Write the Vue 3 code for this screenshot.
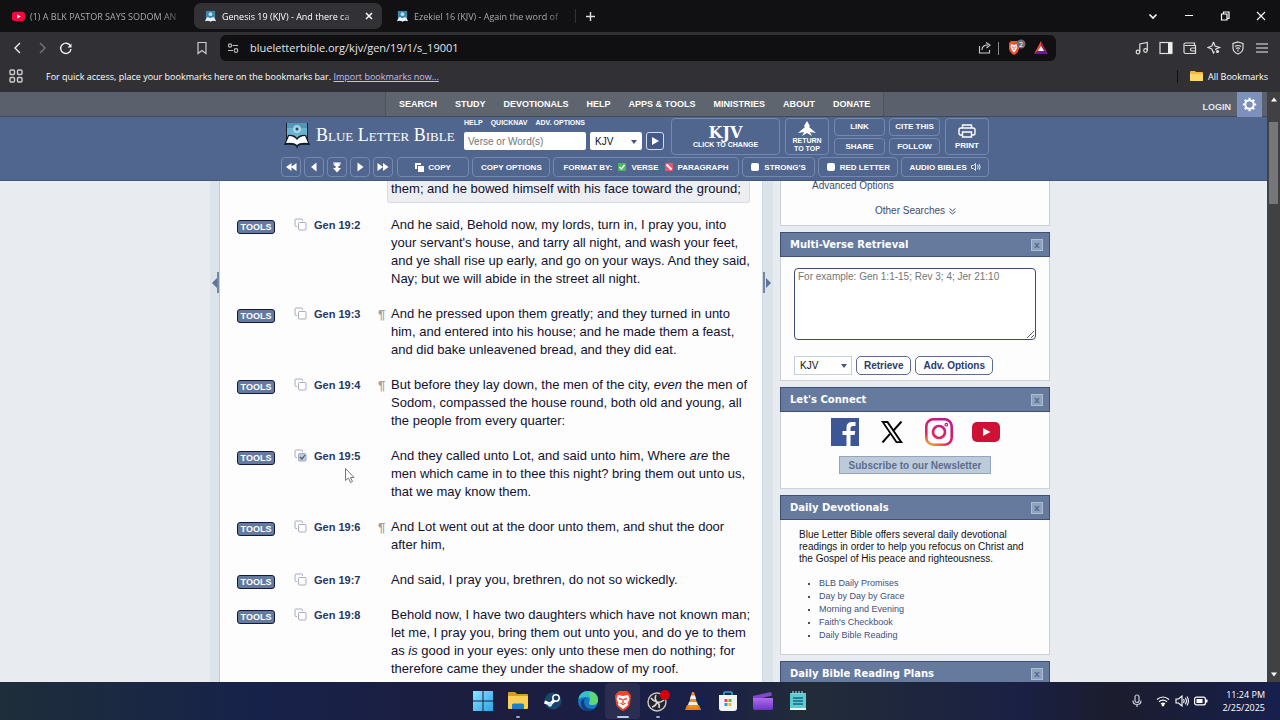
<script setup>
import { ref } from 'vue'

const tabs = [
  { title: '(1) A BLK PASTOR SAYS SODOM AN', icon: 'yt', active: false },
  { title: 'Genesis 19 (KJV) - And there ca', icon: 'blb', active: true },
  { title: 'Ezekiel 16 (KJV) - Again the word of', icon: 'blb', active: false }
]
const nav = ['SEARCH', 'STUDY', 'DEVOTIONALS', 'HELP', 'APPS & TOOLS', 'MINISTRIES', 'ABOUT', 'DONATE']
const steps = [
  { name: 'Previous book', d: 'M7.500 3v8L2 7zM12.500 3v8L7 7z' },
  { name: 'Previous chapter', d: 'M9.500 2.500v9L4 7z' },
  { name: 'Choose chapter', d: 'M3 2.500h8v1H9.500v1h1.500L7 7.500 3 4.500h1.500v-1H3zM3 8h2.500V7h3v1H11l-4 4.500z' },
  { name: 'Next chapter', d: 'M4.500 2.500v9L10.500 7z' },
  { name: 'Next book', d: 'M1.500 3v8L7 7zM7 3v8l5.500-4z' }
]
/* Each verse is a list of printed lines; words between asterisks are italic. */
const verses = [
  { n: '19:2', lines: ['And he said, Behold now, my lords, turn in, I pray you, into', "your servant's house, and tarry all night, and wash your feet,", 'and ye shall rise up early, and go on your ways. And they said,', 'Nay; but we will abide in the street all night.'] },
  { n: '19:3', para: true, lines: ['And he pressed upon them greatly; and they turned in unto', 'him, and entered into his house; and he made them a feast,', 'and did bake unleavened bread, and they did eat.'] },
  { n: '19:4', para: true, lines: ['But before they lay down, the men of the city, *even* the men of', 'Sodom, compassed the house round, both old and young, all', 'the people from every quarter:'] },
  { n: '19:5', checked: true, lines: ['And they called unto Lot, and said unto him, Where *are* the', 'men which came in to thee this night? bring them out unto us,', 'that we may know them.'] },
  { n: '19:6', para: true, lines: ['And Lot went out at the door unto them, and shut the door', 'after him,'] },
  { n: '19:7', lines: ['And said, I pray you, brethren, do not so wickedly.'] },
  { n: '19:8', lines: ['Behold now, I have two daughters which have not known man;', 'let me, I pray you, bring them out unto you, and do ye to them', 'as *is* good in your eyes: only unto these men do nothing; for', 'therefore came they under the shadow of my roof.'] }
]
const devotionals = ['BLB Daily Promises', 'Day by Day by Grace', 'Morning and Evening', "Faith's Checkbook", 'Daily Bible Reading']
const apps = ['start', 'files', 'steam', 'edge', 'brave', 'obs', 'vlc', 'store', 'clip', 'notes']
const url = ref('blueletterbible.org/kjv/gen/19/1/s_19001')
const format = ref('verse')
</script>

<template>
  <div class="screen">
    <header class="browser">
      <div class="tabs">
        <div v-for="t in tabs" :key="t.title" class="tab" :class="{ active: t.active }">
          <svg v-if="t.icon === 'yt'" class="fav" viewBox="0 0 14 14"><rect y="2" width="14" height="10" rx="3" fill="#f5063c" /><path d="M5.500 4.800v4.400L9.500 7z" fill="#fff" /></svg>
          <svg v-else class="fav" viewBox="0 0 14 14"><rect x="2" y="1" width="10" height="8" fill="#3c87a8" /><circle cx="7" cy="4.500" r="2" fill="#b9dcec" /><path d="M1 12l2-4q2-.5 4 1 2-1.500 4-1l2 4q-4-.8-6 .6-2-1.400-6-.6z" fill="#eef6fb" /></svg>
          <span class="tab-title">{{ t.title }}</span>
          <button v-if="t.active" class="plain close" aria-label="Close tab"><svg viewBox="0 0 8 8" width="8" height="8"><path d="M1 1l6 6M7 1L1 7" stroke="#fff" stroke-width="1.500" /></svg></button>
        </div>
        <button class="plain newtab" aria-label="New tab"><svg width="9" height="9" viewBox="0 0 9 9"><path d="M4.500 0v9M0 4.500h9" stroke="#ddd" stroke-width="1.400" /></svg></button>
        <div class="window">
          <button class="plain" aria-label="Search tabs"><svg width="12" height="12" viewBox="0 0 12 12"><path d="M2.500 4.500L6 8l3.500-3.500" fill="none" stroke="#fff" stroke-width="1.600" /></svg></button>
          <button class="plain" aria-label="Minimize"><svg width="12" height="12" viewBox="0 0 12 12"><path d="M2 5.500h8" stroke="#fff" /></svg></button>
          <button class="plain" aria-label="Restore"><svg width="12" height="12" viewBox="0 0 12 12"><path d="M2.500 4h5.500v6H2.500zM4.500 4V2h5.500v6.500H8" fill="none" stroke="#fff" stroke-width="1.200" /></svg></button>
          <button class="plain" aria-label="Close"><svg width="12" height="12" viewBox="0 0 12 12"><path d="M2 2l8 8M10 2l-8 8" stroke="#fff" stroke-width="1.100" /></svg></button>
        </div>
      </div>

      <div class="toolbar">
        <button class="plain t1" aria-label="Back"><svg width="14" height="14" viewBox="0 0 14 14"><path d="M9 2L4 7l5 5" fill="none" stroke="#eee" stroke-width="1.400" /></svg></button>
        <button class="plain t1" aria-label="Forward"><svg width="14" height="14" viewBox="0 0 14 14"><path d="M5 2l5 5-5 5" fill="none" stroke="#77777b" stroke-width="1.400" /></svg></button>
        <button class="plain t1" aria-label="Reload"><svg width="14" height="14" viewBox="0 0 14 14"><path d="M11.500 5A5.200 5.200 0 1 0 12 8" fill="none" stroke="#eee" stroke-width="1.400" /><path d="M12.500 2.500v4h-4z" fill="#eee" /></svg></button>
        <button class="plain mark" aria-label="Bookmark"><svg width="14" height="14" viewBox="0 0 14 14"><path d="M3 1.500h8v11L7 9.500l-4 3z" fill="none" stroke="#ccc" stroke-width="1.200" /></svg></button>
        <div class="address">
          <svg width="12" height="12" viewBox="0 0 12 12" fill="none" stroke="#bbb" stroke-width="1.200"><circle cx="3" cy="3.500" r="1.600" /><path d="M5.500 3.500H11M1 8.500h5" /><circle cx="9" cy="8.500" r="1.800" /></svg>
          <input v-model="url" aria-label="Address" />
          <svg width="14" height="14" viewBox="0 0 14 14" fill="none" stroke="#ccc" stroke-width="1.100"><path d="M1.500 5v7h10V9M4 9q0-5 6-5M8 1.500L12 4 8.500 7" /></svg>
          <i class="bar"></i>
          <svg class="shield" width="20" height="18" viewBox="0 0 20 18"><path d="M2 4l2-2h6l2 2v6q-1 4-5 6-4-2-5-6z" fill="#f0502e" /><path d="M4 5l3 1 3-1 .5 3-2 4L7 13.500 5.500 12l-2-4z" fill="#fff" /><path d="M5 8h1.500M8 8h1.500M7 8v3" stroke="#f0502e" /><circle cx="14" cy="5" r="4.500" fill="#6e6e78" /><text x="14" y="7.500" font-size="7" text-anchor="middle" fill="#fff">2</text></svg>
          <svg class="bat" width="16" height="14" viewBox="0 0 16 14"><path d="M8 0L1 13l7-5z" fill="#f14a2b" /><path d="M8 0l7 13-7-5z" fill="#9b1f63" /><path d="M1 13h14L8 8z" fill="#6a1b9a" /><path d="M8 5l3 5H5z" fill="#fff" /></svg>
        </div>
        <div class="tools">
          <button class="plain" aria-label="Media"><svg width="14" height="14" viewBox="0 0 14 14" fill="none" stroke="#ddd" stroke-width="1.200"><circle cx="3" cy="11" r="1.800" /><circle cx="10.500" cy="9.500" r="1.800" /><path d="M4.800 11V3l7.500-1.500v8" /></svg></button>
          <button class="plain" aria-label="Sidebar"><svg width="14" height="14" viewBox="0 0 14 14"><rect x="1" y="1.500" width="12" height="11" fill="none" stroke="#ddd" stroke-width="1.200" /><path d="M9 2h4v10H9z" fill="#eee" /></svg></button>
          <button class="plain" aria-label="Wallet"><svg width="14" height="14" viewBox="0 0 14 14" fill="none" stroke="#ddd" stroke-width="1.200"><path d="M11.500 4.500V2H2.500Q1 2 1 3.500V11q0 1.500 1.500 1.500h10v-8H2M12.500 7H9a1.500 1.500 0 0 0 0 3h3.500" /></svg></button>
          <button class="plain" aria-label="Assistant"><svg width="14" height="14" viewBox="0 0 14 14" fill="none" stroke="#ddd" stroke-width="1.200"><path d="M6.500 1l1.500 4 4.500 1.500L9 8l-.5 1M6.500 1L4.800 5 1 6.500 4.800 8 6.500 12l1-1.500" /><circle cx="10.500" cy="10.500" r="1" fill="#ddd" /></svg></button>
          <button class="plain" aria-label="VPN"><svg width="14" height="14" viewBox="0 0 14 14" fill="none" stroke="#ddd" stroke-width="1.200"><path d="M7 1l5 1.500V7q0 4-5 6-5-2-5-6V2.500zM4 5.500q3-2 6 0M5 7.500q2-1.300 4 0M7 8.500v2" /></svg></button>
          <button class="plain" aria-label="Menu"><svg width="14" height="14" viewBox="0 0 14 14"><path d="M1 3h12M1 7h12M1 11h12" stroke="#eee" stroke-width="1.200" /></svg></button>
        </div>
      </div>

      <div class="bookmarks">
        <svg width="16" height="16" viewBox="0 0 16 16" fill="none" stroke="#ccc" stroke-width="1.400"><rect x="2" y="2" width="4.500" height="4.500" rx="1" /><rect x="9.500" y="2" width="4.500" height="4.500" rx="1" /><rect x="2" y="9.500" width="4.500" height="4.500" rx="1" /><rect x="9.500" y="9.500" width="4.500" height="4.500" rx="1" /></svg>
        <p>For quick access, place your bookmarks here on the bookmarks bar. <a href="#">Import bookmarks now...</a></p>
        <button class="plain all"><svg width="13" height="12" viewBox="0 0 13 12"><path d="M0 2q0-1 1-1h4l1 1h6q1 0 1 1v7q0 1-1 1H1q-1 0-1-1z" fill="#f5b73c" /><path d="M0 4h13v6q0 1-1 1H1q-1 0-1-1z" fill="#ffd868" /></svg>All Bookmarks</button>
      </div>
    </header>

    <div class="view">
      <div class="site">
        <nav class="topnav">
          <div class="navlinks"><a v-for="n in nav" :key="n" href="#">{{ n }}</a></div>
          <a class="login" href="#">LOGIN</a>
          <button class="gear" aria-label="Settings"><svg width="15" height="15" viewBox="0 0 15 15"><circle cx="7.500" cy="7.500" r="4.200" fill="none" stroke="#fff" stroke-width="2" /><g stroke="#fff" stroke-width="2.200"><path d="M7.500 .8v2M7.500 12.200v2M.8 7.500h2M12.200 7.500h2M2.800 2.800l1.400 1.400M10.800 10.800l1.400 1.400M2.800 12.200l1.400-1.400M10.800 4.200l1.400-1.400" /></g></svg></button>
        </nav>

        <div class="header">
          <div class="head-in">
            <div class="row1">
              <a class="brand" href="#">
                <svg width="28" height="30" viewBox="0 0 28 30"><path d="M3 3h22v17H3z" fill="#17222f" /><path d="M4 3h20v14q-6-1-10 2-4-3-10-2z" fill="#69b3cf" /><path d="M4 3h20v5H4z" fill="#4f97b8" /><circle cx="14" cy="9" r="4" fill="#c6e6f0" opacity=".7" /><circle cx="14" cy="9" r="1.500" fill="#204b66" /><path d="M1 25l4-10q6-1 9 3 3-4 9-3l4 10q-9-1-12 1l-1 3-1-3q-3-2-12-1z" fill="#101b2b" /><path d="M3 23l3-7q5 0 8 4 3-4 8-4l3 7q-8-1-11 2-3-3-11-2z" fill="#fff" /></svg>
                <span>Blue Letter Bible</span>
              </a>
              <form class="find" @submit.prevent>
                <div class="mini"><a href="#">HELP</a><a href="#">QUICKNAV</a><a href="#">ADV. OPTIONS</a></div>
                <div class="fields">
                  <input aria-label="Verse or Word(s)" placeholder="Verse or Word(s)" />
                  <span class="pick"><select aria-label="Search version"><option>KJV</option></select></span>
                  <button class="go" aria-label="Search"><svg width="9" height="10" viewBox="0 0 9 10"><path d="M1 1l7 4-7 4z" fill="#fff" /></svg></button>
                </div>
              </form>
              <button class="hb version"><b>KJV</b><small>CLICK TO CHANGE</small></button>
              <button class="hb top"><svg width="20" height="16" viewBox="0 0 20 16"><path d="M10 0l3 5-1 1 7 6-6-1 2 4-5-3-5 3 2-4-6 1 7-6-1-1z" fill="#fff" /></svg><small>RETURN<br />TO TOP</small></button>
              <div class="quad">
                <button class="hb">LINK</button><button class="hb">CITE THIS</button>
                <button class="hb">SHARE</button><button class="hb">FOLLOW</button>
              </div>
              <button class="hb print"><svg width="18" height="16" viewBox="0 0 18 16" fill="none" stroke="#fff" stroke-width="1.400"><path d="M4.500 5V2h9v3M4 12H2.500Q1 12 1 10V7q0-2 2-2h12q2 0 2 2v3q0 2-1.500 2H14M4.500 9h9v5h-9z" /></svg>PRINT</button>
            </div>
            <div class="row2">
              <button v-for="s in steps" :key="s.name" class="hb step" :aria-label="s.name"><svg width="14" height="14" viewBox="0 0 14 14"><path :d="s.d" fill="#fff" /></svg></button>
              <button class="hb copy"><svg width="9" height="9" viewBox="0 0 9 9"><path d="M0 0h6v2H2v4H0z" fill="#fff" /><path d="M3 3h6v6H3z" fill="#fff" /></svg>COPY</button>
              <button class="hb opts">COPY OPTIONS</button>
              <div class="hb format" role="radiogroup" aria-label="Format by">
                <span>FORMAT BY:</span>
                <label><input v-model="format" type="radio" value="verse" name="format" /><svg width="8" height="8" viewBox="0 0 8 8"><rect width="8" height="8" rx="1" fill="#49b861" /><path d="M1.500 4l2 2 3-4" fill="none" stroke="#fff" stroke-width="1.400" /></svg>VERSE</label>
                <label><input v-model="format" type="radio" value="paragraph" name="format" /><svg width="8" height="8" viewBox="0 0 8 8"><rect width="8" height="8" rx="1" fill="#e8566a" /><path d="M1.500 1.500l5 5" stroke="#fff" stroke-width="2" /></svg>PARAGRAPH</label>
              </div>
              <label class="hb strong"><input type="checkbox" />STRONG'S</label>
              <label class="hb red"><input type="checkbox" />RED LETTER</label>
              <button class="hb audio">AUDIO BIBLES<svg width="10" height="8" viewBox="0 0 10 8" fill="none" stroke="#e3e8f2"><path d="M.5 2.500h2l2-2v7l-2-2h-2zM6.500 2q1.500 2 0 4M8 1q2.500 3 0 6" /></svg></button>
            </div>
          </div>
        </div>

        <div class="body">
          <div class="cols">
            <div class="gutter left"><button class="plain" aria-label="Collapse left"></button></div>
            <main>
              <section class="verse first"><p class="text">them; and he bowed himself with his face toward the ground;</p></section>
              <section v-for="v in verses" :key="v.n" class="verse">
                <button class="toolbtn">TOOLS</button>
                <button class="plain dup" :aria-label="'Copy Gen ' + v.n"><svg width="13" height="13" viewBox="0 0 13 13"><path d="M3 8.500H2Q1 8.500 1 7.500V2q0-1 1-1h5.500q1 0 1 1v1" fill="none" stroke="#a9adbb" /><rect x="4.500" y="4.500" width="7.500" height="7.500" rx="1" :fill="v.checked ? '#c3cadb' : '#fff'" :stroke="v.checked ? '#a3abc0' : '#a9adbb'" /><path v-if="v.checked" d="M6 8l2 2 3-4" fill="none" stroke="#44557c" stroke-width="1.200" /></svg></button>
                <a class="refr" href="#">Gen {{ v.n }}</a>
                <span class="pil"><template v-if="v.para">¶</template></span>
                <p class="text"><span v-for="line in v.lines" :key="line" class="line"><template v-for="(p, i) in line.split('*')" :key="i"><em v-if="i % 2">{{ p }}</em><template v-else>{{ p }}</template></template></span></p>
              </section>
            </main>
            <div class="gutter right"><button class="plain" aria-label="Collapse right"></button></div>
            <aside>
              <section class="panel searches"><a href="#">Advanced Options</a><a class="other" href="#">Other Searches <svg width="7" height="7" viewBox="0 0 7 7" fill="none" stroke="#3f5175"><path d="M.5 .5l3 2.500 3-2.500M.5 3.500l3 2.500 3-2.500" /></svg></a></section>
              <section class="panel">
                <h2>Multi-Verse Retrieval<button class="x" aria-label="Close Multi-Verse Retrieval">x</button></h2>
                <div class="multi">
                  <textarea aria-label="Verses" placeholder="For example: Gen 1:1-15; Rev 3; 4; Jer 21:10"></textarea>
                  <div class="acts"><span class="pick"><select aria-label="Version"><option>KJV</option></select></span><button>Retrieve</button><button>Adv. Options</button></div>
                </div>
              </section>
              <section class="panel">
                <h2>Let's Connect<button class="x" aria-label="Close Let's Connect">x</button></h2>
                <div class="connect">
                  <div class="social">
                    <a href="#" aria-label="Facebook"><svg width="28" height="28" viewBox="0 0 28 28"><path d="M0 0h28v28H0z" fill="#3d5796" /><path d="M15.500 28V17h-4v-4h4V9.500Q15.500 4 21 4h3.500v4H22q-2.500 0-2.500 2.500V13h4.800l-.8 4h-4v11z" fill="#fff" /></svg></a>
                    <a href="#" aria-label="X"><svg width="22" height="22" viewBox="0 0 22 22"><path d="M0 0h7l15 22h-7zM3.500 2l12.500 18.200h2.500L6 2z" fill="#050505" fill-rule="evenodd" /><path d="M20.500 .5L12.500 9.500M9 12.800L1.500 21.500" fill="none" stroke="#050505" stroke-width="2" /></svg></a>
                    <a href="#" aria-label="Instagram"><svg width="28" height="28" viewBox="0 0 28 28" fill="none" stroke="url(#ig)" stroke-width="2.600"><defs><linearGradient id="ig" gradientUnits="userSpaceOnUse" x1="6" y1="28" x2="20" y2="0"><stop offset="0" stop-color="#f9a233" /><stop offset=".3" stop-color="#e0245e" /><stop offset="1" stop-color="#c0158f" /></linearGradient></defs><rect x="1.300" y="1.300" width="25.400" height="25.400" rx="7" /><circle cx="14" cy="14" r="6" /><circle cx="21.300" cy="6.700" r=".6" /></svg></a>
                    <a href="#" aria-label="YouTube"><svg width="28" height="20" viewBox="0 0 28 20"><rect width="28" height="20" rx="5" fill="#ce1236" /><path d="M11 6v8l7.500-4z" fill="#fff" /></svg></a>
                  </div>
                  <button class="sub">Subscribe to our Newsletter</button>
                </div>
              </section>
              <section class="panel">
                <h2>Daily Devotionals<button class="x" aria-label="Close Daily Devotionals">x</button></h2>
                <div class="daily">
                  <p>Blue Letter Bible offers several daily devotional<br />readings in order to help you refocus on Christ and<br />the Gospel of His peace and righteousness.</p>
                  <ul><li v-for="d in devotionals" :key="d"><a href="#">{{ d }}</a></li></ul>
                </div>
              </section>
              <section class="panel"><h2>Daily Bible Reading Plans<button class="x" aria-label="Close Daily Bible Reading Plans">x</button></h2></section>
            </aside>
          </div>
        </div>
      </div>
      <div class="scroll">
        <svg width="8" height="5" viewBox="0 0 8 5"><path d="M1 4.500l3-4 3 4z" fill="#fff" /></svg>
        <div class="track"><div class="thumb"></div></div>
        <svg width="8" height="5" viewBox="0 0 8 5"><path d="M1 .5l3 4 3-4z" fill="#fff" /></svg>
      </div>
      <svg class="pointer" width="12" height="18" viewBox="0 0 12 18"><path d="M1.500 1.500v12l3-2.500 2 4.500 2-1-2-4H10z" fill="#fff" stroke="#777" /></svg>
    </div>

    <footer class="taskbar">
      <div class="apps">
        <button v-for="a in apps" :key="a" class="plain app" :class="a" :aria-label="a">
          <svg v-if="a === 'start'" width="20" height="20" viewBox="0 0 20 20"><defs><linearGradient id="w" x1="0" y1="0" x2="1" y2="1"><stop offset="0" stop-color="#8be4ff" /><stop offset="1" stop-color="#28a3ea" /></linearGradient></defs><path d="M0 0h9.500v9.500H0zM10.500 0H20v9.500h-9.500zM0 10.500h9.500V20H0zM10.500 10.500H20V20h-9.500z" fill="url(#w)" /></svg>
          <svg v-else-if="a === 'files'" width="20" height="20" viewBox="0 0 20 20"><path d="M0 2q0-1 1-1h6l2 2h10q1 0 1 1v5H0z" fill="#d99c22" /><path d="M0 5h20v12q0 1-1 1H1q-1 0-1-1z" fill="#fbcf56" /><path d="M4 18v-4q0-1.500 1.500-1.500h9Q16 12.500 16 14v4z" fill="#1d80c4" /></svg>
          <svg v-else-if="a === 'steam'" width="20" height="20" viewBox="0 0 20 20"><circle cx="10" cy="10" r="8.500" fill="#14486e" /><path d="M1.500 10l8 3 4-3 3-1V4l-5-2-3 7-3 1.500z" fill="#122a49" /><path d="M1.500 11l5.500 2 5-4" fill="none" stroke="#fff" stroke-width="3" /><circle cx="13" cy="7" r="3.200" fill="#1d3a5c" stroke="#fff" stroke-width="1.500" /><circle cx="7" cy="13.500" r="2.200" fill="#d7e1ea" /></svg>
          <svg v-else-if="a === 'edge'" width="20" height="20" viewBox="0 0 20 20"><circle cx="10" cy="10" r="10" fill="#1478c7" /><path d="M.5 8Q2 0 10 0q9 0 10 8 0 6-6 6-4 0-2.500-3Q13 6 8 6 3 6 .5 8z" fill="#35c0c9" /><path d="M13 1q7 2 7 8 0 5-6 5-4 0-2.500-3Q14 5 10 2z" fill="#5fd873" /><path d="M6 10q0 8 8 8 2 0 4-1.500Q14 21 8 19.500 2 17 3 11 4 7.500 8 7 6 8 6 10z" fill="#0c3f7d" /></svg>
          <svg v-else-if="a === 'brave'" width="20" height="20" viewBox="0 0 20 20"><path d="M3 3l3-3h8l3 3 1 2-1 8q-1 4-7 7-6-3-7-7L2 5z" fill="#f0452a" /><path d="M5 4l5 1 5-1 1.500 4-2 4 .5 2-5 4-5-4 .5-2-2-4z" fill="#fff" /><path d="M6 7.500l3 1M14 7.500l-3 1M10 8v4M7.500 12l2.500 1.500L12.500 12" stroke="#f0452a" stroke-width="1.400" fill="none" /></svg>
          <svg v-else-if="a === 'obs'" width="24" height="22" viewBox="0 0 24 22"><circle cx="11" cy="12" r="9" fill="#242429" stroke="#c8c8cc" stroke-width="1.400" /><path d="M10 5q-2 4 1 7 4 1 7-2M11 12q-1 4-5 5M11 12q-4-1-6-4M11 12q3 2 2 6" stroke="#d7d7da" stroke-width="1.600" fill="none" /><circle cx="19" cy="5" r="5" fill="#d9000d" /></svg>
          <svg v-else-if="a === 'vlc'" width="20" height="20" viewBox="0 0 20 20"><path d="M4 14h12l2 5H2z" fill="#ee7f12" /><path d="M9 1h2l4 15q-5 2-10 0z" fill="#f58b1b" /><path d="M8 4.500h4l1 3.500H7zM6 11h8l1 3H5z" fill="#eef0f2" /></svg>
          <svg v-else-if="a === 'store'" width="20" height="20" viewBox="0 0 20 20"><path d="M6 5V2q0-1 1-1h6q1 0 1 1v3" fill="none" stroke="#36a7e0" stroke-width="1.600" /><path d="M1 4h18v13q0 3-3 3H4q-3 0-3-3z" fill="#f3f4f6" /><path d="M6.500 8h3v3h-3z" fill="#ee4b2c" /><path d="M10.500 8h3v3h-3z" fill="#6fb62c" /><path d="M6.500 12h3v3h-3z" fill="#2b9be0" /><path d="M10.500 12h3v3h-3z" fill="#f8b819" /></svg>
          <svg v-else-if="a === 'clip'" width="20" height="20" viewBox="0 0 20 20"><defs><linearGradient id="cl" x1="0" y1="0" x2="0" y2="1"><stop offset="0" stop-color="#b06cf0" /><stop offset="1" stop-color="#6a37c4" /></linearGradient></defs><path d="M0 5L18 1l1 3.500L5 8H0z" fill="#8446cf" /><path d="M0 7h20v10q0 2-2 2H2q-2 0-2-2z" fill="url(#cl)" /></svg>
          <svg v-else width="18" height="20" viewBox="0 0 18 20"><path d="M1 2h16v16H1z" fill="#5ccbd3" /><path d="M1 17h16v2H1z" fill="#f2f5f6" /><path d="M4 0v3M7 0v3M10 0v3M13 0v3" stroke="#c3edf0" /><path d="M4 7h10M4 10h10M4 13h10" stroke="#156a7c" stroke-width="1.400" /></svg>
        </button>
      </div>
      <div class="tray">
        <svg width="12" height="14" viewBox="0 0 12 14" fill="none" stroke="#c8cbd6" stroke-width="1.200"><rect x="4" y="1" width="4" height="7.500" rx="2" /><path d="M2 6.500q0 4 4 4t4-4M6 10.500V13" /></svg>
        <svg class="wifi" width="14" height="12" viewBox="0 0 14 12" fill="none" stroke="#fff" stroke-width="1.200"><path d="M1 4.500q6-5 12 0M3 6.800q4-3.300 8 0M5 9q2-1.600 4 0" /><circle cx="7" cy="10" r=".8" fill="#fff" /></svg>
        <svg width="14" height="12" viewBox="0 0 14 12" fill="none" stroke="#fff" stroke-width="1.100"><path d="M1 4h2.500L7 1v10L3.500 8H1zM8.500 4q1.200 2 0 4M10.300 2.800q2.200 3.200 0 6.400M12 1.500q2.800 4.500 0 9" /></svg>
        <svg width="14" height="10" viewBox="0 0 14 10"><rect x=".6" y="1.100" width="10.800" height="7.800" rx="2" fill="none" stroke="#fff" stroke-width="1.200" /><path d="M2.500 3h6v4h-6zM12 3.500h1.500v3H12z" fill="#fff" /></svg>
        <div class="clock">11:24 PM<br />2/25/2025</div>
      </div>
    </footer>
  </div>
</template>

<style>
body { margin: 0; background: #111113; }
</style>

<style scoped>
* { box-sizing: border-box; }
.screen { height: 100vh; display: flex; flex-direction: column; overflow: hidden; font-family: "Liberation Sans", Arial, sans-serif; color: #0d1030; }
button, input, select, textarea { font-family: inherit; margin: 0; }
a { text-decoration: none; color: inherit; }
p, h2, ul { margin: 0; padding: 0; }
svg { flex: none; display: block; }
.plain { border: 0; background: none; padding: 0; color: inherit; display: flex; align-items: center; justify-content: center; }

.browser { flex: none; background: #313135; color: #fff; font-family: "Open Sans", "Noto Sans", sans-serif; font-size: 9px; }
.tabs { height: 32px; background: #111113; display: flex; align-items: center; }
.tab { width: 188px; height: 26px; display: flex; align-items: center; padding: 0 9px 0 10px; gap: 5px; color: #aaa; border-radius: 7px; }
.tab:first-child { width: 194px; padding-left: 12px; }
.tab:nth-child(3) { width: 193px; padding-left: 14px; padding-right: 6px; }
.tab.active { background: #323236; color: #fff; }
.fav { width: 13px; height: 13px; }
.tab-title { flex: 1; overflow: hidden; white-space: nowrap; mask-image: linear-gradient(90deg, #000 85%, transparent); }
.close { width: 8px; }
.newtab { width: 29px; border-left: 1px solid #333; height: 14px; }
.window { margin-left: auto; margin-right: 13px; display: flex; gap: 24px; }
.toolbar { height: 30px; display: flex; align-items: center; padding: 2px 11px 0; }
.t1 { margin-right: 10px; }
.mark { margin-left: 112px; margin-right: 11px; }
.address { flex: none; width: 836px; height: 26px; background: #101012; border-radius: 6px; display: flex; align-items: center; padding: 0 7px; }
.address input { flex: 1; border: 0; background: none; color: #e4e4e6; font-size: 11px; padding: 0 0 1px 11px; outline: 0; }
.bar { width: 1px; height: 13px; background: #888; margin: 0 8px 0 6px; }
.bat { margin-left: 6px; }
.tools { margin-left: auto; display: flex; gap: 10px; }
.bookmarks { height: 30px; display: flex; align-items: center; padding: 0 12px 2px 8px; }
.bookmarks p { margin-left: 22px; }
.bookmarks a { color: #c5bdf5; text-decoration: underline; }
.all { margin-left: auto; gap: 5px; border-left: 1px solid #111; padding-left: 12px; font: inherit; }

.view { flex: 1; min-height: 0; display: flex; position: relative; }
.site { flex: 1; min-width: 0; display: flex; flex-direction: column; background: #e8ecf0; }
.topnav { flex: none; height: 25px; background: #5a616c; border-bottom: 1px solid #414959; color: #fff; display: flex; align-items: center; font-size: 9px; font-weight: bold; }
.navlinks { height: 24px; margin-left: 385px; padding: 0 4px; border: 1px solid #4c535e; border-width: 0 1px; background: #5e656f; display: flex; align-items: center; }
.navlinks a { padding: 0 9px; }
.login { margin-left: auto; margin-top: 5px; color: #e4e7ec; }
.gear { width: 25px; height: 25px; margin: 0 5px 0 6px; border: 0; padding: 0; background: #7c90bb; display: flex; align-items: center; justify-content: center; }
.header { flex: none; height: 64px; background: #51668f; border-bottom: 1px solid #43577f; color: #fff; }
.head-in { width: 708px; margin-left: 281px; padding-top: 1px; }
.row1 { display: flex; height: 37px; gap: 5px; }
.row2 { display: flex; gap: 3px; margin-top: 2px; }
.brand { width: 178px; display: flex; gap: 5px; padding: 0 0 3px 2px; align-items: center; font-family: "Liberation Serif", serif; font-size: 18px; font-variant: small-caps; white-space: nowrap; }
.find { width: 202px; }
.mini { display: flex; gap: 8px; font-size: 7px; line-height: 10px; font-weight: bold; margin-bottom: 4px; }
.fields { display: flex; gap: 4px; }
.fields input { width: 122px; height: 18px; border: 0; border-radius: 2px; padding: 0 4px; font-size: 10px; }
.fields select { width: 52px; height: 18px; border: 0; border-radius: 2px; padding: 0 5px; font-size: 10px; background: #fff; color: #111; appearance: none; }
.pick { position: relative; display: flex; }
.pick::after { content: ""; position: absolute; right: 5px; top: 8px; border: 3px solid transparent; border-top: 4px solid #44587f; border-bottom: 0; pointer-events: none; }
.go { width: 18px; height: 18px; border: 1px solid #d5dcea; border-radius: 3px; background: #44598a; padding: 0; display: flex; align-items: center; justify-content: center; }
.hb { border: 1px solid #7488b0; border-radius: 4px; background: none; color: #fff; font-size: 8px; line-height: 9px; font-weight: bold; padding: 0; display: flex; align-items: center; justify-content: center; white-space: nowrap; }
.hb small { font-size: 7px; line-height: 8px; }
.version { width: 109px; flex-direction: column; }
.version b { font-family: "DejaVu Serif", serif; font-size: 16px; line-height: 17px; }
.top { width: 44px; flex-direction: column; }
.quad { width: 106px; display: grid; grid-template-columns: 1fr 1fr; gap: 2px 4px; }
.print { width: 44px; flex-direction: column; gap: 2px; }
.row2 .hb { height: 20px; gap: 4px; }
.step { width: 20px; }
.row2 .copy { width: 73px; margin-left: 1px; }
.opts { width: 78px; }
.format { width: 186px; }
.row2 .format { gap: 6px; }
.format label { display: flex; align-items: center; gap: 5px; position: relative; }
.format input { position: absolute; opacity: 0; width: 8px; height: 8px; margin: 0; }
.strong { width: 74px; }
.red { width: 80px; }
.row2 .strong, .row2 .red { gap: 5px; }
.strong input, .red input { appearance: none; width: 8px; height: 8px; background: #fff; border-radius: 2px; }
.audio { width: 88px; }

.body { flex: 1; min-height: 0; overflow: hidden; }
.cols { width: 847px; margin: 0 auto; display: flex; min-height: 100%; }
.gutter { background: #dce3e9; display: flex; flex-direction: column; align-items: center; padding-top: 91px; }
.gutter button { height: 21px; width: 8px; }
.gutter button::before { content: ""; border: 5px solid transparent; }
.left { width: 10px; border-right: 1px solid #c3cdd8; align-items: flex-end; }
.left button { border-right: 2px solid #7587a8; }
.left button::before { border-right-color: #5f7299; border-left: 0; }
.right { width: 11px; border-left: 1px solid #d0d7df; align-items: flex-start; }
.right button { border-left: 2px solid #7587a8; }
.right button::before { border-left-color: #5f7299; border-right: 0; }
main { width: 542px; background: #fdfdfe; }
.verse { display: grid; grid-template-columns: 57px 20px 64px 13px 1fr; align-items: start; padding-left: 17px; margin-bottom: 17px; }
.text { font-size: 13px; line-height: 18px; white-space: pre; color: #12112e; }
.line { display: block; }
.first { display: block; padding-left: 167px; margin: -1px 0 13px; }
.first .text { width: 363px; padding: 0 3px 4px; background: #eceef1; border: 1px solid #d8dce2; border-top: 0; border-radius: 0 0 3px 3px; }
.toolbtn { width: 38px; height: 14px; margin-top: 4px; padding: 0; background: #647a9f; color: #fff; border: 1px solid #16193f; border-radius: 3px; font-size: 9px; line-height: 12px; font-weight: bold; }
.dup { margin-top: 2px; width: 13px; }
.refr { font-size: 11px; line-height: 18px; font-weight: bold; color: #263765; }
.pil { color: #a0a0a4; font-size: 13px; line-height: 20px; font-weight: bold; }

aside { width: 270px; margin-left: 7px; display: flex; flex-direction: column; gap: 6px; }
.panel { background: #fdfdfe; border: 1px solid #c9d2da; border-top: 0; }
.searches { height: 45px; font-size: 10px; line-height: 10px; color: #3f4b6b; display: flex; flex-direction: column; padding-left: 31px; gap: 15px; }
.other { display: flex; gap: 4px; align-items: center; padding-left: 63px; }
.panel h2 { height: 25px; margin: 0 -1px; background: #667a9e; border: 1px solid #3c5078; color: #fff; font-family: "DejaVu Sans", Verdana, sans-serif; font-size: 10px; font-weight: bold; display: flex; align-items: center; justify-content: space-between; padding: 0 6px 0 9px; }
.x { width: 12px; height: 12px; border: 1px solid #aebdd2; background: #8ea2c0; color: #5a6c90; font-size: 9px; line-height: 8px; font-weight: bold; padding: 0; }
.multi { padding: 11px 13px 5px; }
.multi textarea { display: block; width: 242px; height: 72px; border: 1px solid #3e4a74; border-radius: 4px; padding: 2px 3px; font-size: 10px; line-height: 12px; background: #fff; }
.acts { display: flex; gap: 4px; margin-top: 16px; font-size: 10px; }
.acts select { width: 58px; height: 19px; appearance: none; border: 1px solid #c5cede; background: #fff; font-size: 10px; padding: 0 5px; color: #111; }
.acts button { height: 19px; border: 1px solid #5c6b90; border-radius: 5px; background: #fff; color: #2b3c68; font-size: 10px; font-weight: bold; padding: 0 7px; }
.connect { padding: 6px 0 14px; display: flex; flex-direction: column; align-items: center; gap: 10px; }
.social { display: flex; align-items: center; gap: 19px; height: 28px; }
.social a { width: 28px; display: flex; justify-content: center; }
.sub { width: 152px; height: 18px; border: 1px solid #93a5bf; background: #bccada; color: #5c6d8c; font-size: 10px; font-weight: bold; padding: 0; }
.daily { padding: 9px 18px 12px; color: #111; }
.daily p { font-size: 10px; line-height: 12px; white-space: nowrap; }
.daily ul { margin-top: 12px; padding-left: 20px; font-size: 9px; line-height: 13px; }
.daily li::marker { font-size: 7px; }
.daily a { color: #3f517c; }

.scroll { width: 13px; background: #414143; display: flex; flex-direction: column; align-items: center; padding: 5px 0; }
.track { flex: 1; padding-top: 20px; }
.thumb { width: 9px; height: 82px; background: #77777a; }
.pointer { position: absolute; left: 344px; top: 375px; }

.taskbar { flex: none; height: 38px; background: linear-gradient(90deg, #1e2e3a, #17224a 20%, #1c1d3e 38%, #1a2048 55%, #222c38 63%, #1a2044 80%, #1b1c2c 87%, #17204e); display: grid; grid-template-columns: 1fr auto 1fr; align-items: center; color: #fff; }
.apps { grid-column: 2; display: flex; }
.app { width: 35px; height: 36px; position: relative; }
.brave { background: #ffffff12; border-radius: 4px; }
.files::after, .obs::after, .brave::after { content: ""; position: absolute; bottom: 1px; width: 4px; height: 2px; border-radius: 1px; background: #9fa6bd; }
.brave::after { width: 12px; background: #b9cde8; }
.tray { justify-self: end; display: flex; align-items: center; gap: 5px; margin-right: 15px; }
.wifi { margin-left: 8px; }
.clock { width: 52px; text-align: right; font-family: "Open Sans", "Noto Sans", sans-serif; font-size: 9px; line-height: 13px; }
</style>
